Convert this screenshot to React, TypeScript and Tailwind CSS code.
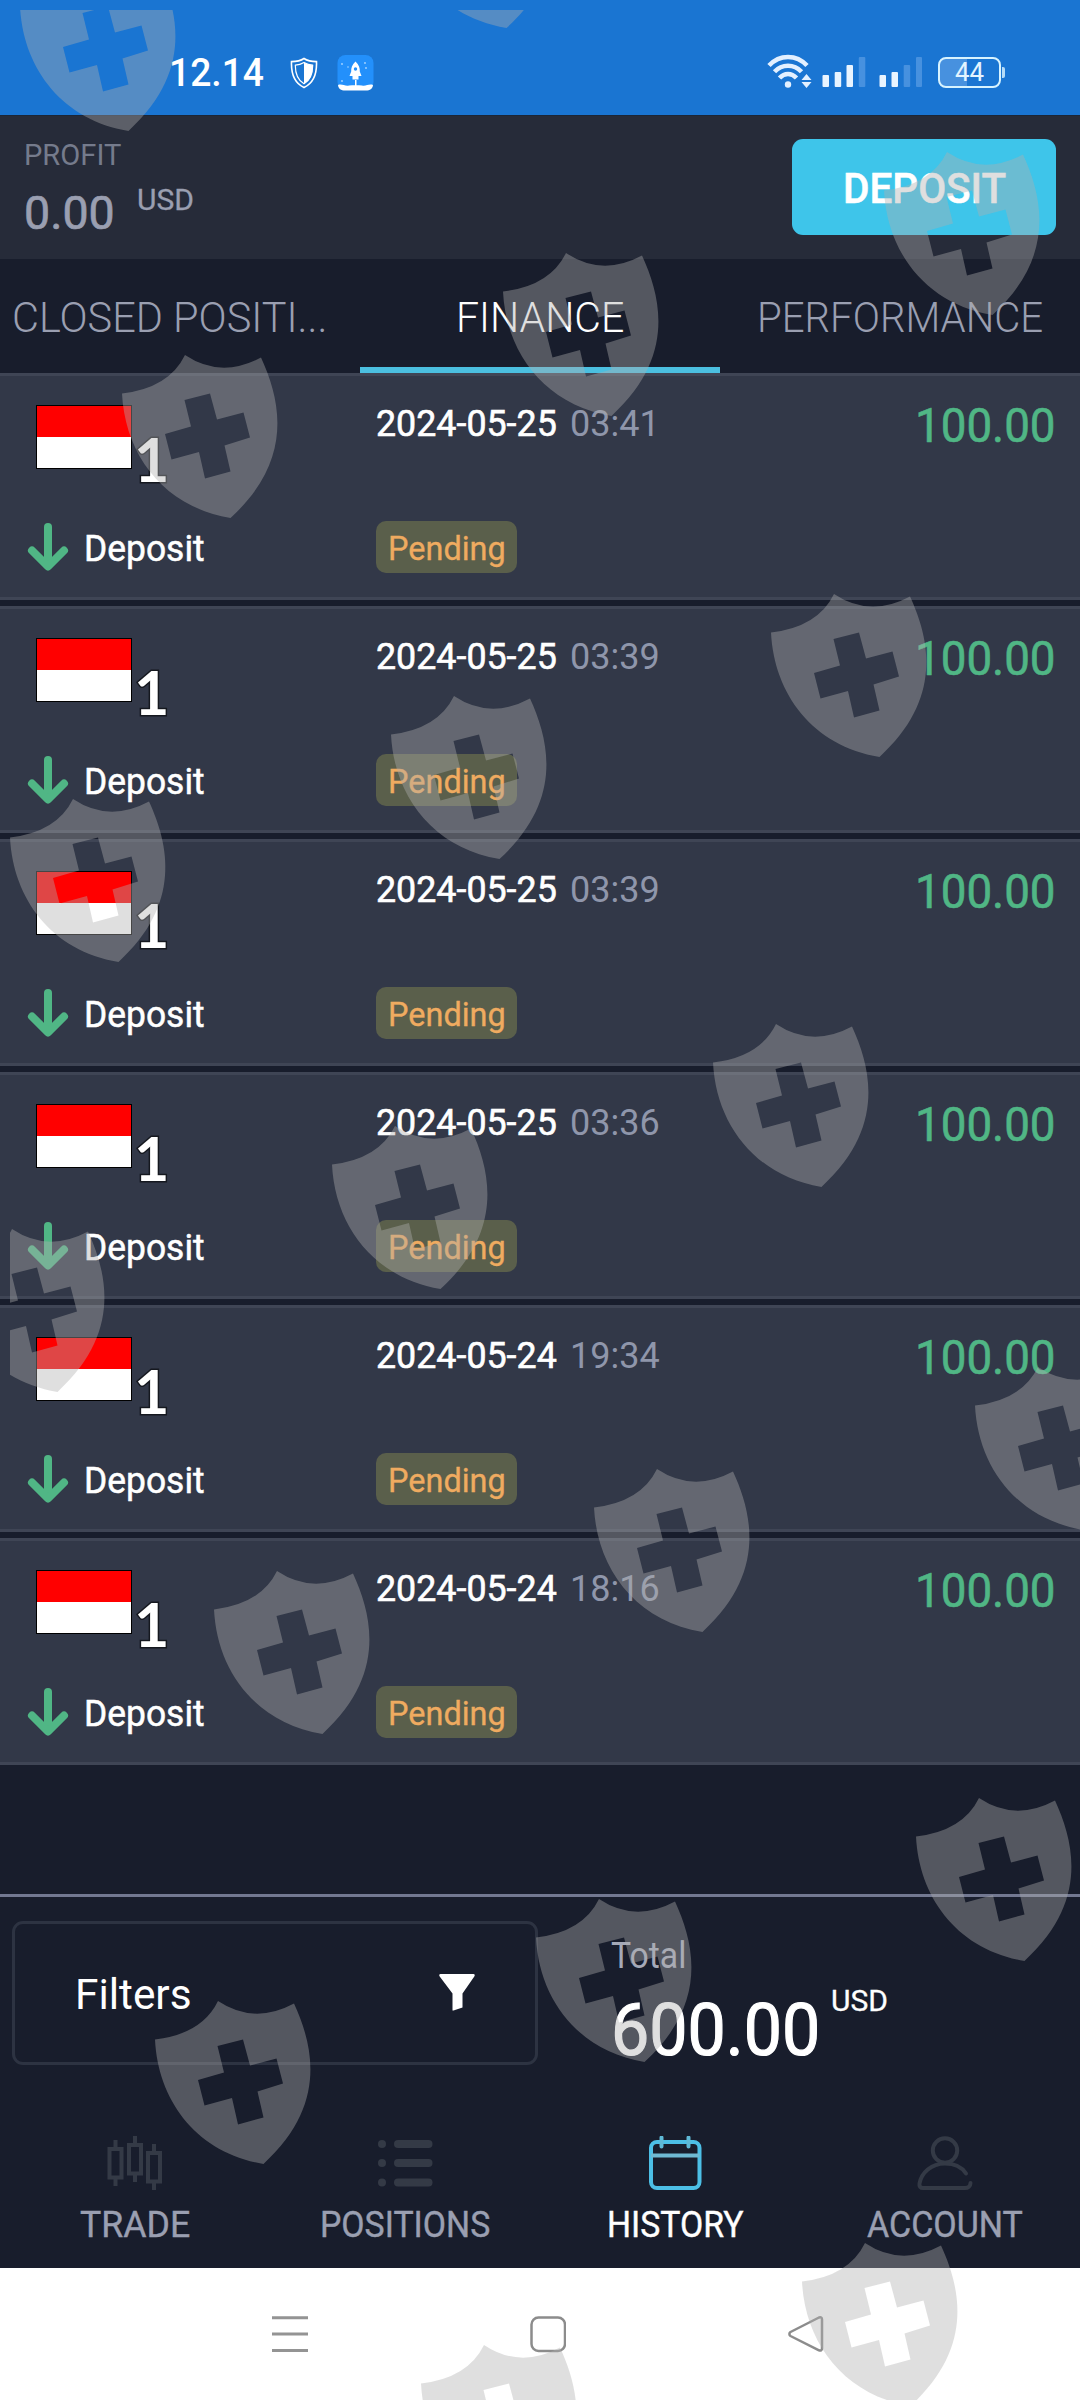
import { useLayoutEffect, useRef } from 'react';
import type { ReactNode } from 'react';
import clsx from 'clsx';

type Transaction = {
    id: number;
    date: string;
    time: string;
    amount: string;
};

const transactions: Transaction[] = [
    { id: 1, date: '2024-05-25', time: '03:41', amount: '100.00' },
    { id: 2, date: '2024-05-25', time: '03:39', amount: '100.00' },
    { id: 3, date: '2024-05-25', time: '03:39', amount: '100.00' },
    { id: 4, date: '2024-05-25', time: '03:36', amount: '100.00' },
    { id: 5, date: '2024-05-24', time: '19:34', amount: '100.00' },
    { id: 6, date: '2024-05-24', time: '18:16', amount: '100.00' },
];

const shields = [
    [20, -32],
    [398, -135],
    [884, 152],
    [503, 253],
    [122, 355],
    [771, 594],
    [391, 696],
    [10, 799],
    [713, 1024],
    [332, 1126],
    [-51, 1229],
    [975, 1367],
    [594, 1469],
    [214, 1571],
    [916, 1798],
    [536, 1899],
    [155, 2001],
    [802, 2243],
    [421, 2345],
];

// Squeezes a line of text to the width set by its class
function FitText({ children, className }: { children: string; className: string }) {
    const outer = useRef<HTMLSpanElement>(null);
    const inner = useRef<HTMLSpanElement>(null);

    useLayoutEffect(() => {
        if (outer.current && inner.current) {
            const ratio = outer.current.clientWidth / inner.current.offsetWidth;
            inner.current.style.transform = `scaleX(${ratio})`;
        }
    }, []);

    return (
        <span ref={outer} className={clsx('block shrink-0 whitespace-nowrap', className)}>
            <span ref={inner} className="inline-block origin-left">
                {children}
            </span>
        </span>
    );
}

function StatusBar() {
    return (
        <div className="flex h-[115px] bg-[#1a75d2] pl-[169px] text-white">
            <FitText className="mt-[54px] h-[38px] w-[95px] text-[38px] leading-[38px] font-medium">12.14</FitText>

            <svg className="mt-[57px] ml-[26px] h-[32px] w-[28px]" viewBox="0 0 28 32" fill="none">
                <path
                    d="M14 1.5C10.500 3.800 6 4.600 1.500 4.600C1 17 4 26 14 30.500C24 26 27 17 26.500 4.600C22 4.600 17.500 3.800 14 1.500Z"
                    stroke="#fff"
                    strokeWidth="1.600"
                />
                <path
                    d="M14 5.500C11 7.300 8.500 8 5.300 8.200C5.300 17 7.500 23 14 26.800C20.500 23 22.700 17 22.700 8.200C19.500 8 17 7.300 14 5.500Z"
                    stroke="#fff"
                    strokeWidth="1.200"
                />
                <path d="M14 5.500V26.800C20.500 23 22.700 17 22.700 8.200C19.500 8 17 7.300 14 5.500Z" fill="#fff" />
            </svg>

            <svg className="mt-[55px] ml-[19px] h-[36px] w-[37px]" viewBox="0 0 37 36">
                <rect x="0.500" width="36" height="35" rx="8" fill="#2390fb" />
                <path d="M18.500 6.500C22 9.500 23 13.500 22.800 16.500L24.500 21H21.500V24.500H15.500V21H12.500L14.200 16.500C14 13.500 15 9.500 18.500 6.500Z" fill="#fff" />
                <circle cx="18.500" cy="14" r="1.700" fill="#2390fb" />
                <path d="M18 25H19.500V31H18Z" fill="#fff" />
                <path d="M1 30C5 28.500 8 31.500 12 30.500C16 30 21 30 25 30.500C29 31.500 32 28.500 36 30C35.500 34 33 35.500 29 35.500H8C4 35.500 1.500 34 1 30Z" fill="#fff" />
                <g fill="#a9d6ff">
                    <circle cx="5" cy="9" r="0.900" />
                    <circle cx="11" cy="12" r="0.800" />
                    <circle cx="28" cy="8" r="0.900" />
                    <circle cx="29" cy="13" r="0.900" />
                    <circle cx="5" cy="26" r="0.900" />
                </g>
            </svg>

            <svg className="mt-[54px] ml-[393px] h-[36px] w-[45px]" viewBox="0 0 45 36" fill="none">
                <g stroke="#e3f0ff" strokeWidth="4.500">
                    <path d="M2 11.500C12.500 0 29.500 0 40 11.500" />
                    <path d="M7.500 17.800C15 9.800 27 9.800 34.500 17.800" />
                    <path d="M12.500 24C17.500 18.500 24.500 18.500 29.500 24" />
                </g>
                <circle cx="21" cy="30.500" r="3.200" fill="#e3f0ff" />
                <path d="M39.500 20L44.500 26H34.500Z M39.500 34L44.500 28H34.500Z" fill="#e3f0ff" />
            </svg>

            <svg className="mt-[57px] ml-[10px] h-[31px] w-[100px]" viewBox="0 0 100 31">
                <g fill="#e9f4ff">
                    <rect x="0.500" y="18" width="6.500" height="12" rx="1" />
                    <rect x="12.700" y="15" width="6.500" height="15" rx="1" />
                    <rect x="24.500" y="8" width="6.500" height="22" rx="1" />
                    <rect x="57.500" y="18" width="6.500" height="12" rx="1" />
                    <rect x="69.500" y="15" width="6.500" height="15" rx="1" />
                </g>
                <g fill="#4791df">
                    <rect x="36.800" y="0" width="6.500" height="30" rx="1" />
                    <rect x="81.700" y="8" width="6.500" height="22" rx="1" />
                    <rect x="94" y="0" width="6" height="30" rx="1" />
                </g>
            </svg>

            <div className="mt-[57px] ml-[16px] flex h-[31px] items-center">
                <div className="flex h-[31px] w-[63px] items-center justify-center rounded-[8px] border-2 border-[#d7f3ff] bg-linear-to-r from-[#4791df] from-45% to-[#1a75d2] to-45%">
                    <FitText className="w-[29px] text-[25px] leading-[26px] text-[#e3f4ff]">44</FitText>
                </div>
                <div className="ml-px h-[11px] w-[3px] rounded-r-[2px] bg-[#b5dcf8]" />
            </div>
        </div>
    );
}

function Header() {
    return (
        <div className="flex h-[144px] justify-between border-t border-[#1b2638] bg-[#262b39] pr-[24px] pl-[24px]">
            <div className="pt-[24px]">
                <FitText className="w-[97px] text-[30px] leading-[30px] text-[#757b8c]">PROFIT</FitText>
                <div className="mt-[15px] flex text-[#9a9fb1]">
                    <FitText className="mt-[5px] w-[91px] text-[47px] leading-[46px] [-webkit-text-stroke:0.7px]">0.00</FitText>
                    <FitText className="ml-[22px] w-[57px] text-[30px] leading-[30px] [-webkit-text-stroke:0.3px]">USD</FitText>
                </div>
            </div>
            <button type="button" className="mt-[23px] flex h-[96px] w-[264px] items-center justify-center rounded-[11px] bg-[#3ec5ea] pt-[4px] text-white">
                <FitText className="w-[163px] text-[42px] leading-[42px] font-medium [-webkit-text-stroke:0.5px]">DEPOSIT</FitText>
            </button>
        </div>
    );
}

function Tabs() {
    return (
        <div className="grid h-[114px] grid-cols-3 pt-[38px] text-[42px] leading-[42px] font-light text-[#9a9fb1]">
            <div className="pl-[12px]">
                <FitText className="w-[315px]">CLOSED POSITI...</FitText>
            </div>
            <div className="border-b-[6px] border-[#4bbfe0] pl-[96px] text-white">
                <FitText className="w-[168px]">FINANCE</FitText>
            </div>
            <div className="pl-[37px]">
                <FitText className="w-[286px]">PERFORMANCE</FitText>
            </div>
        </div>
    );
}

function TransactionRow({ item }: { item: Transaction }) {
    return (
        <div className="flex h-[227px] border-y-[3px] border-[#3f4555] bg-[#323848] pr-[24px]">
            <div className="w-[376px] pt-[29px]">
                <div className="flex h-[80px] pl-[36px]">
                    <div className="h-[64px] w-[96px] border border-black bg-linear-to-b from-[#ff0000] from-50% to-white to-50%" />
                    <span className="mt-[30px] ml-[2px] font-['Lato'] text-[61px] leading-[48px] font-bold text-white [-webkit-text-stroke:3px_#15181f] [paint-order:stroke_fill]">
                        1
                    </span>
                </div>
                <div className="mt-[36px] flex h-[52px] items-center pl-[27px]">
                    <svg className="h-[50px] w-[42px]" viewBox="0 0 42 50" fill="none" stroke="#50b685" strokeWidth="8" strokeLinecap="round" strokeLinejoin="round">
                        <path d="M21 5V43" />
                        <path d="M5 28.500L21 44.500L37 28.500" />
                    </svg>
                    <FitText className="mt-[4px] ml-[15px] w-[121px] text-[36px] leading-[36px] text-white [-webkit-text-stroke:0.5px]">Deposit</FitText>
                </div>
            </div>

            <div className="flex-1 pt-[30px]">
                <div className="flex text-[36px] leading-[36px]">
                    <FitText className="w-[181px] text-white [-webkit-text-stroke:0.6px]">{item.date}</FitText>
                    <FitText className="ml-[13px] w-[90px] text-[#8f96ab]">{item.time}</FitText>
                </div>
                <div className="mt-[79px] flex h-[52px] w-[141px] items-center rounded-[10px] bg-[#5a5f4b] pt-[4px] pl-[12px] text-[#efab60]">
                    <FitText className="w-[118px] text-[33px] leading-[34px] [-webkit-text-stroke:0.3px]">Pending</FitText>
                </div>
            </div>

            <FitText className="mt-[26px] h-[48px] w-[141px] text-[48px] leading-[48px] text-[#50b685] [-webkit-text-stroke:0.6px]">{item.amount}</FitText>
        </div>
    );
}

function Summary() {
    return (
        <div className="flex h-[171px] border-t-[3px] border-[#727891] pt-[24px] pl-[12px]">
            <div className="flex h-[144px] w-[526px] items-center justify-between rounded-[11px] border-[3px] border-[#2d3342] pr-[60px] pl-[60px]">
                <FitText className="mt-[4px] w-[117px] text-[42px] leading-[42px] text-white">Filters</FitText>
                <svg className="mb-[2px] h-[38px] w-[36px]" viewBox="0 0 36 38" fill="#fff">
                    <path d="M1.500 1H34.500C36 1 36 2.500 35.300 3.600L23.500 20.500V34.500L14.500 37.500H13.500V20.500L0.700 3.600C0 2.500 0 1 1.500 1Z" />
                </svg>
            </div>
            <div className="ml-[73px]">
                <FitText className="mt-[17px] w-[75px] text-[36px] leading-[36px] text-[#a5a9b8]">Total</FitText>
                <div className="mt-[7px] flex text-white">
                    <FitText className="mt-[13px] w-[209px] text-[73px] leading-[72px] [-webkit-text-stroke:1.2px]">600.00</FitText>
                    <FitText className="mt-[5px] ml-[11px] w-[57px] text-[30px] leading-[30px] [-webkit-text-stroke:0.3px]">USD</FitText>
                </div>
            </div>
        </div>
    );
}

function NavItem({ icon, children, active }: { icon: ReactNode; children: ReactNode; active?: boolean }) {
    return (
        <div
            className={clsx(
                'flex flex-col items-center text-[36px] leading-[37px] [-webkit-text-stroke:0.4px]',
                active ? 'text-white' : 'text-[#9a9fb1]'
            )}
        >
            {icon}
            <div className="mt-[17px]">{children}</div>
        </div>
    );
}

function BottomNav() {
    return (
        <div className="grid h-[203px] grid-cols-4 pt-[71px]">
            <NavItem
                icon={
                    <svg className="h-[54px] w-[56px]" viewBox="0 0 56 54" fill="none" stroke="#343a46" strokeWidth="4">
                        <rect x="2.500" y="13" width="12" height="28.500" />
                        <path d="M8.500 4V13M8.500 41.500V50" />
                        <rect x="22" y="9" width="12" height="28.500" />
                        <path d="M28 0V9M28 37.500V46" />
                        <rect x="41" y="17" width="12" height="28.500" />
                        <path d="M47 8V17M47 45.500V54" />
                    </svg>
                }
            >
                <FitText className="w-[110px]">TRADE</FitText>
            </NavItem>
            <NavItem
                icon={
                    <svg className="h-[54px] w-[56px]" viewBox="0 0 56 54" fill="#343a46">
                        <circle cx="5" cy="8" r="4" />
                        <rect x="17" y="4" width="38.500" height="8" rx="4" />
                        <circle cx="5" cy="27" r="4" />
                        <rect x="17" y="23" width="38.500" height="8" rx="4" />
                        <circle cx="5" cy="46.500" r="4" />
                        <rect x="17" y="42.500" width="38.500" height="8" rx="4" />
                    </svg>
                }
            >
                <FitText className="w-[170px]">POSITIONS</FitText>
            </NavItem>
            <NavItem
                active
                icon={
                    <svg className="h-[54px] w-[54px]" viewBox="0 0 54 54" fill="none" stroke="#4cbfe6" strokeWidth="4">
                        <rect x="3" y="6" width="48.500" height="46" rx="6" />
                        <path d="M3 19.500H51.500" stroke="#6fb9d2" />
                        <path d="M13.500 1.500V10.500M40.500 1.500V10.500" strokeLinecap="round" stroke="#5fb9d6" />
                    </svg>
                }
            >
                <FitText className="w-[137px]">HISTORY</FitText>
            </NavItem>
            <NavItem
                icon={
                    <svg className="h-[54px] w-[56px]" viewBox="0 0 56 54" fill="none" stroke="#343a46" strokeWidth="4" strokeLinecap="round">
                        <circle cx="28" cy="14.500" r="12.200" />
                        <path d="M49 37.500C44.500 30.500 36.500 27.500 28 27.500C14 27.500 4.500 37 2.500 47.500C2 50.500 3.500 52 6 52H48C51 52 53.500 50 53.500 47" />
                    </svg>
                }
            >
                <FitText className="w-[156px]">ACCOUNT</FitText>
            </NavItem>
        </div>
    );
}

function SystemNav() {
    return (
        <div className="flex h-[132px] gap-[222px] bg-white pt-[47px] pl-[272px]">
            <svg className="h-[38px] w-[36px]" viewBox="0 0 36 38" stroke="#949494" strokeWidth="3">
                <path d="M0 2.700H36M0 19H36M0 35.500H36" />
            </svg>
            <svg className="h-[38px] w-[36px]" viewBox="0 0 36 38" fill="none" stroke="#8c8c8c" strokeWidth="2.500">
                <rect x="1.500" y="2.500" width="33.500" height="33.500" rx="7" />
            </svg>
            <svg className="h-[38px] w-[36px]" viewBox="0 0 36 38" fill="none" stroke="#8c8c8c" strokeWidth="2.500" strokeLinejoin="round">
                <path d="M31 2.500L2.500 17C1 18 1 20 2.500 21L31 35.300C33 36 34 35 34 33.500V4.500C34 2.500 33 1.800 31 2.500Z" />
            </svg>
        </div>
    );
}

// Tilted shields laid over the whole screen
function ShieldOverlay() {
    return (
        <svg className="pointer-events-none absolute inset-0 h-[2400px] w-[1080px]" viewBox="0 0 1080 2400">
            <defs>
                <clipPath id="safe-area">
                    <rect x="10" y="10" width="1070" height="2390" />
                </clipPath>
                <path
                    id="shield"
                    fillRule="evenodd"
                    d="M0 38.500Q47 33 63 0Q99 24 139 2.500C159 46 172 105 108.500 163C42 152 3 100 0 38.500ZM62.500 45L88 38.500L95 64.500L121.500 57.500L128 82.500L102.500 90.500L108.500 116.500L83 123.500L77 97L49.500 104.500L43 79L69 71.500Z"
                />
            </defs>
            <g clipPath="url(#safe-area)" fill="#afafaf" fillOpacity="0.4">
                {shields.map(([x, y]) => (
                    <use key={`${x}-${y}`} href="#shield" x={x} y={y} />
                ))}
            </g>
        </svg>
    );
}

export default function App() {
    return (
        <div className="relative flex h-[2400px] w-[1080px] flex-col overflow-hidden bg-[#181d2c] font-['Roboto',sans-serif]">
            <StatusBar />
            <Header />
            <Tabs />
            <div className="flex flex-1 flex-col gap-[6px]">
                {transactions.map((item) => (
                    <TransactionRow key={item.id} item={item} />
                ))}
            </div>
            <Summary />
            <BottomNav />
            <SystemNav />
            <ShieldOverlay />
        </div>
    );
}
